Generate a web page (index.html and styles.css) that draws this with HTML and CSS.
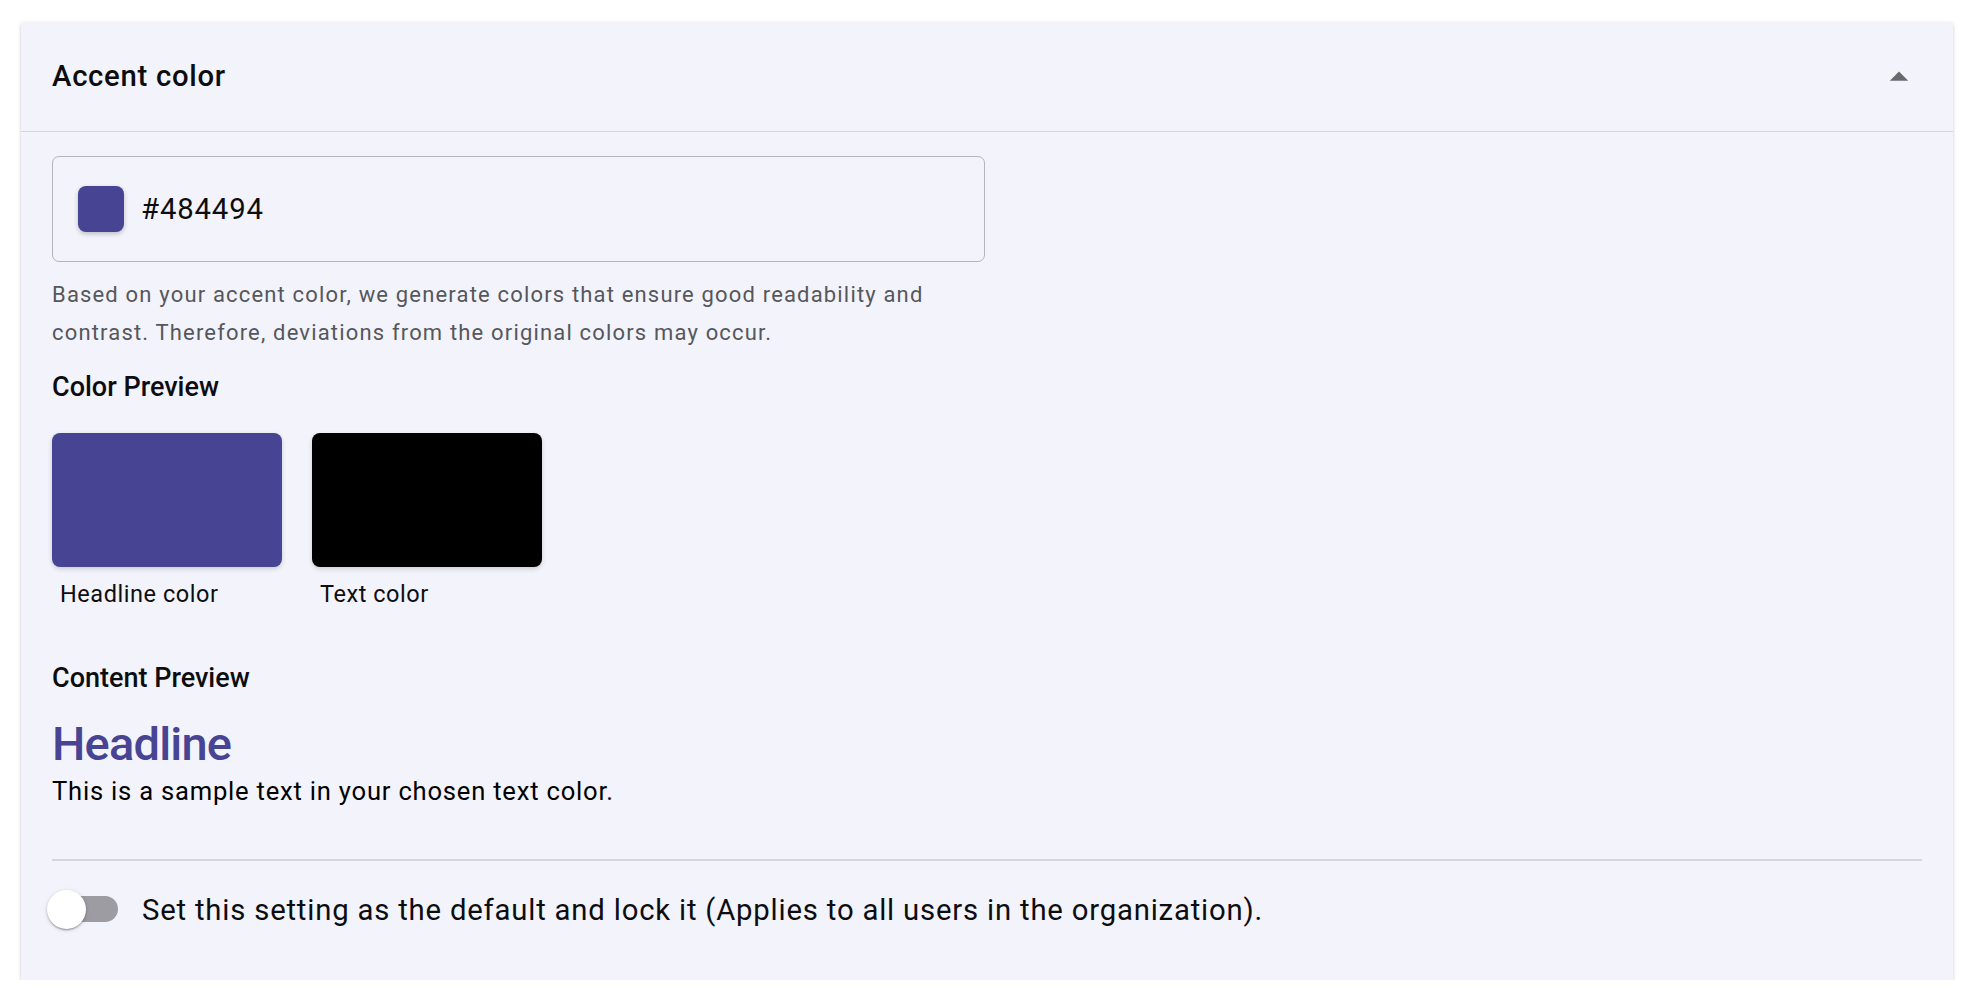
FILE: index.html
```html
<!DOCTYPE html>
<html lang="en">
<head>
<meta charset="utf-8">
<title>Accent color</title>
<link rel="stylesheet" href="styles.css">
</head>
<body>
<section class="card">
  <header class="card-header">
    <h2 class="card-title">Accent color</h2>
    <svg class="caret" viewBox="0 0 24 24" aria-hidden="true"><path d="m7 14 5-5 5 5z"/></svg>
  </header>
  <div class="card-body">
    <div class="color-input">
      <span class="input-swatch"></span>
      <span class="input-value">#484494</span>
    </div>
    <p class="helper">Based on your accent color, we generate colors that ensure good readability and contrast. Therefore, deviations from the original colors may occur.</p>

    <h3 class="section-title">Color Preview</h3>
    <div class="swatches">
      <div class="swatch-item">
        <div class="swatch swatch-headline"></div>
        <div class="swatch-label">Headline color</div>
      </div>
      <div class="swatch-item">
        <div class="swatch swatch-text"></div>
        <div class="swatch-label">Text color</div>
      </div>
    </div>

    <h3 class="section-title content-title">Content Preview</h3>
    <div class="preview-headline">Headline</div>
    <p class="preview-text">This is a sample text in your chosen text color.</p>

    <hr class="divider">

    <label class="toggle-row">
      <span class="switch">
        <span class="switch-track"></span>
        <span class="switch-thumb"></span>
      </span>
      <span class="toggle-text">Set this setting as the default and lock it (Applies to all users in the organization).</span>
    </label>
  </div>
</section>
</body>
</html>
```

FILE: styles.css
```css
* { box-sizing: border-box; }

html, body {
  margin: 0;
  background: #ffffff;
}

body {
  padding: 23px 23px 0 21px;
  font-family: Roboto, "Liberation Sans", Arial, sans-serif;
  color: #111114;
}

.card {
  background: #f2f3fb;
  box-shadow: 0 2px 0 0 rgba(0,0,0,0.22), 0 3px 3px 0 rgba(0,0,0,0.10), 0 0 4px 0 rgba(0,0,0,0.12);
}

.card-header {
  height: 109px;
  padding: 0 32px 0 31px;
  display: flex;
  align-items: center;
  justify-content: space-between;
  border-bottom: 1px solid #d5d6de;
}

.card-title {
  margin: 0;
  font-size: 29.3px;
  font-weight: 500;
  letter-spacing: 0.7px;
  color: #0d0d10;
  line-height: 1.5;
}

.caret {
  width: 44px;
  height: 44px;
  fill: #68686d;
  display: block;
}

.card-body {
  padding: 24px 31px 47px 31px;
}

.color-input {
  width: 933px;
  height: 106px;
  border: 1.5px solid #b4b5ba;
  border-radius: 7px;
  display: flex;
  align-items: center;
  padding-left: 25px;
}

.input-swatch {
  width: 46px;
  height: 46px;
  border-radius: 8px;
  background: #484494;
  box-shadow: 0 2px 5px rgba(0,0,0,0.22);
  flex: none;
}

.input-value {
  margin-left: 17px;
  font-size: 29.3px;
  letter-spacing: 0.85px;
  color: #0d0d10;
}

.helper {
  margin: 14px 0 0 0;
  max-width: 933px;
  font-size: 22px;
  line-height: 38px;
  letter-spacing: 1.17px;
  color: #56575c;
}

.section-title {
  margin: 15px 0 0 0;
  font-size: 27px;
  font-weight: 500;
  line-height: 41px;
  color: #0d0d10;
}

.swatches {
  display: flex;
  gap: 30px;
  margin-top: 25px;
}

.swatch {
  width: 230px;
  height: 134px;
  border-radius: 8px;
  box-shadow: 0 2px 5px rgba(0,0,0,0.16);
}

.swatch-headline { background: #484494; }
.swatch-text { background: #000000; }

.swatch-label {
  margin-top: 9px;
  padding-left: 8px;
  font-size: 23.5px;
  line-height: 36px;
  letter-spacing: 0.55px;
  color: #0d0d10;
}

.content-title {
  margin-top: 46px;
}

.preview-headline {
  margin-top: 15px;
  font-size: 47px;
  font-weight: 500;
  line-height: 59px;
  letter-spacing: -0.8px;
  color: #484494;
}

.preview-text {
  margin: 0;
  font-size: 25.6px;
  line-height: 37px;
  letter-spacing: 0.78px;
  color: #000000;
}

.divider {
  margin: 49px 0 0 0;
  border: 0;
  height: 1.5px;
  background: #d5d6de;
}

.toggle-row {
  margin-top: 26px;
  height: 46px;
  display: flex;
  align-items: center;
}

.switch {
  position: relative;
  width: 71px;
  height: 39px;
  margin-left: -5px;
  flex: none;
}

.switch-track {
  position: absolute;
  left: 10px;
  right: 0;
  top: 6px;
  height: 26px;
  border-radius: 13px;
  background: #9d9ca2;
}

.switch-thumb {
  position: absolute;
  left: 0;
  top: 0;
  width: 39px;
  height: 39px;
  border-radius: 50%;
  background: #ffffff;
  box-shadow: 0 2px 2px -1px rgba(0,0,0,0.25), 0 1px 2px 0 rgba(0,0,0,0.16), 0 1px 5px 0 rgba(0,0,0,0.12);
}

.toggle-text {
  margin-left: 24px;
  font-size: 29.3px;
  letter-spacing: 0.8px;
  color: #0d0d10;
}
```
